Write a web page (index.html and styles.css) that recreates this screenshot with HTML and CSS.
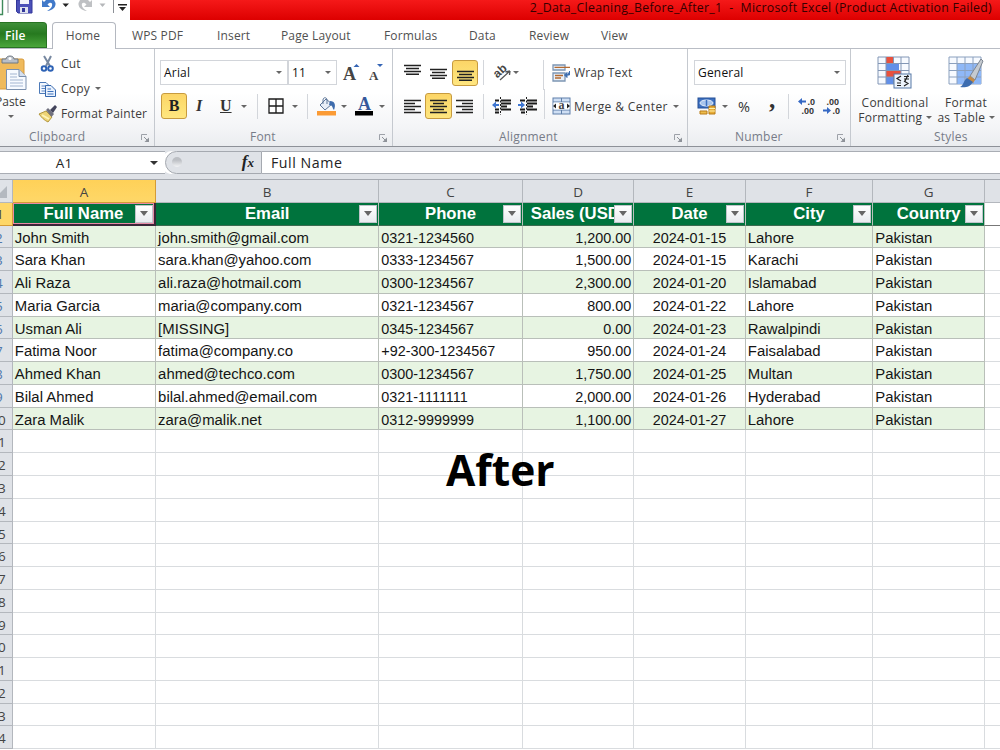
FILE: index.html
```html
<!DOCTYPE html>
<html lang="en">
<head>
    <meta charset="UTF-8" />
    <meta name="viewport" content="width=device-width, initial-scale=1.0" />
    <title>2_Data_Cleaning_Before_After_1 - Microsoft Excel</title>
    <link rel="stylesheet" href="styles.css">
</head>
<body>
    <!-- TITLE BAR -->
    <header class="titlebar">
        <svg class="quick" width="130" height="20" viewBox="0 0 130 20">
            <path d="M0 14.5H2.5V0" fill="none" stroke="#3f8a5b" stroke-width="1.4"/>
            <path d="M8 0V13M113.5 0V13" stroke="#8b8f96"/>
            <path d="M16.5 0H32V13H18L16.500 11.500Z" fill="#4b50b8" stroke="#32369a"/>
            <path d="M20 0H29V4H20Z" fill="#f2f4fb"/>
            <path d="M20 7H28V13H20Z" fill="#dfe3ee"/>
            <path d="M22 8H25V12H22Z" fill="#32369a"/>
            <path d="M42 0V7H50L47.500 4.500C50 1.500 53 3 52 6C51.500 8 50 9 47 11C53 10.500 56 7 55.500 3L54 0H46L44 2Z" fill="#4179c9"/>
            <path d="M92 0V7H84L86.500 4.500C84 1.500 81 3 82 6C82.500 8 84 9 87 11C81 10.500 78 7 78.500 3L80 0H88L90 2Z" fill="#bfc1c4"/>
            <path d="M62.500 3.500H69L65.700 7Z" fill="#222"/>
            <path d="M99.500 3.500H105.500L102.500 7Z" fill="#b5b7ba"/>
            <path d="M118 4H127V5.500H118ZM119 7H126L122.500 11Z" fill="#222"/>
        </svg>
        <div class="title">2_Data_Cleaning_Before_After_1 &nbsp;-&nbsp; Microsoft Excel (Product Activation Failed)</div>
    </header>

    <!-- TABS -->
    <nav class="tabs">
        <span class="file">File</span>
        <span class="home">Home</span>
        <span>WPS PDF</span>
        <span>Insert</span>
        <span>Page Layout</span>
        <span>Formulas</span>
        <span>Data</span>
        <span>Review</span>
        <span>View</span>
    </nav>

    <!-- RIBBON -->
    <section class="ribbon">
        <div class="group clipboard">
            <div class="clip-body">
                <div class="paste">
                    <svg width="28" height="38" viewBox="0 0 28 38">
                        <rect x="-8" y="4" width="32" height="30" rx="2" fill="#efba5c" stroke="#d79b3c"/>
                        <path d="M2 4H6C6 0 14 0 14 4H18V8H2Z" fill="#b9bfc8" stroke="#6f7883"/>
                        <circle cx="10" cy="3.500" r="1.500" fill="#fff"/>
                        <path d="M6.500 14.500H19L26 21.500V34.500H6.500Z" fill="#f7faff" stroke="#7b90ae"/>
                        <path d="M19 14.500V21.500H26" fill="#d5e0f0" stroke="#7b90ae"/>
                        <path d="M10 19H17M10 22H17M10 25H23M10 28H23M10 31H23" stroke="#a3b5d0"/>
                    </svg>
                    <span>Paste</span>
                    <i class="arrow"></i>
                </div>
                <div class="clip-list">
                    <div>
                        <svg width="20" height="18" viewBox="0 0 20 18">
                            <path d="M6 1L12 11M13 1L8 11" stroke="#7788a0" stroke-width="2"/>
                            <circle cx="6" cy="13.500" r="2.300" fill="none" stroke="#2d62b5" stroke-width="2"/>
                            <circle cx="12.500" cy="13.500" r="2.300" fill="none" stroke="#2d62b5" stroke-width="2"/>
                        </svg>
                        <span>Cut</span>
                    </div>
                    <div>
                        <svg width="20" height="18" viewBox="0 0 20 18">
                            <path d="M1.500 2.500H8L11.500 6V13.500H1.500Z" fill="#f2f7fe" stroke="#4d7ab8"/>
                            <path d="M3.500 6H8M3.500 8.500H8M3.500 11H8" stroke="#5c86c4"/>
                            <path d="M7.500 5.500H13L17.500 10V16.500H7.500Z" fill="#eaf2fd" stroke="#3567ad"/>
                            <path d="M9.500 9H13M9.500 11.500H15.500M9.500 14H15.500" stroke="#3f73bd"/>
                        </svg>
                        <span class="copy">Copy</span><i class="arrow"></i>
                    </div>
                    <div>
                        <svg width="20" height="18" viewBox="0 0 20 18">
                            <path d="M1 9L8 6L14 12L10 17C6 15 4 13 1 9Z" fill="#eed476" stroke="#b3973f"/>
                            <path d="M4 10L11 14" stroke="#fff4b7" stroke-width="2"/>
                            <path d="M8 5L10 3L16 9L13.500 12Z" fill="#70717f"/>
                            <path d="M12 5L17 0L19 2L15 8Z" fill="#43445c"/>
                        </svg>
                        <span>Format Painter</span>
                    </div>
                </div>
            </div>
            <div class="label"><span>Clipboard</span><svg class="launch" width="8" height="8" viewBox="0 0 8 8"><path d="M.500 6V.500H6" fill="none" stroke="#9da1a8"/><path d="M3 3L6 6" stroke="#8e9299"/><path d="M8 3.500V8H3.500Z" fill="#8e9299"/></svg></div>
        </div>

        <div class="group font">
            <div class="row font-top">
                <div class="select">Arial<i class="arrow"></i></div>
                <div class="select">11<i class="arrow"></i></div>
                <svg class="grow" width="20" height="22" viewBox="0 0 20 22">
                    <text x="0" y="18" class="serif" font-size="18">A</text>
                    <path d="M10.500 5H16.500L13.500 2Z" fill="#3565b5"/>
                </svg>
                <svg class="shrink" width="20" height="22" viewBox="0 0 20 22">
                    <text x="0" y="18" class="serif" font-size="13">A</text>
                    <path d="M8 2H14L11 5Z" fill="#3565b5"/>
                </svg>
            </div>
            <div class="row font-bottom">
                <b class="on letter">B</b>
                <em class="letter">I</em>
                <u class="letter">U</u>
                <i class="arrow"></i>
                <i class="sep"></i>
                <svg width="16" height="16" viewBox="0 0 16 16"><path d="M1 1H15V15H1ZM8 1V15M1 8H15" fill="#fff" stroke="#1b1b1b" stroke-width="1.300"/></svg>
                <i class="arrow"></i>
                <i class="sep"></i>
                <svg width="19" height="19" viewBox="0 0 19 19">
                    <path d="M3 8L9 2L15 7L8 13Z" fill="#e8eef7" stroke="#5d7699"/>
                    <path d="M6 7V3C6 0 10 0 10 3V7" fill="none" stroke="#5d7699"/>
                    <path d="M13 4C18 4 19 8 17 13C15 11 16 8 12 8Z" fill="#3e6cad"/>
                    <rect x="0" y="14" width="19" height="4.500" fill="#fb9b35"/>
                </svg>
                <i class="arrow"></i>
                <svg width="19" height="19" viewBox="0 0 19 19">
                    <text x="3" y="13" class="serif blue" font-size="18">A</text>
                    <rect x="0" y="14" width="18" height="4.500" fill="#000"/>
                </svg>
                <i class="arrow"></i>
            </div>
            <div class="label"><span>Font</span><svg class="launch" width="8" height="8" viewBox="0 0 8 8"><path d="M.500 6V.500H6" fill="none" stroke="#9da1a8"/><path d="M3 3L6 6" stroke="#8e9299"/><path d="M8 3.500V8H3.500Z" fill="#8e9299"/></svg></div>
        </div>

        <div class="group alignment">
            <div class="row align-top">
                <svg width="17" height="17" viewBox="0 0 17 17"><path d="M0 1.500H17M2 4.500H15M0 7.500H17M2 10.200H15" stroke="#222" stroke-width="1.400"/></svg>
                <svg width="17" height="17" viewBox="0 0 17 17"><path d="M0 5.500H17M2 8.500H15M0 11.500H17M2 14.200H15" stroke="#222" stroke-width="1.400"/></svg>
                <div class="on"><svg width="17" height="17" viewBox="0 0 17 17"><path d="M0 7.500H17M2 10.500H15M0 13.500H17M2 16.200H15" stroke="#222" stroke-width="1.400"/></svg></div>
                <i class="sep"></i>
                <svg width="19" height="18" viewBox="0 0 19 18">
                    <text x="1" y="12" class="ab" transform="rotate(-42 6 9)">ab</text>
                    <path d="M7 16L17 7M17 7L12.500 8M17 7L16.500 11" fill="none" stroke="#555" stroke-width="1.300"/>
                </svg>
                <i class="arrow"></i>
                <i class="sep tall"></i>
                <svg width="20" height="18" viewBox="0 0 20 18">
                    <path d="M1 1H13V6H1ZM1 9H13V17H1Z" fill="#e9f0f8" stroke="#7c95b3" stroke-width="1.300"/>
                    <path d="M2.500 3.300H18M3 11.500H11M3 14H9" stroke="#b36a31" stroke-width="1.300"/>
                    <path d="M17.500 7V11H15M15 8.500V13.500L12.500 11Z" fill="#3f6faf" stroke="#3f6faf"/>
                </svg>
                <span class="wrap">Wrap Text</span>
            </div>
            <div class="row align-bottom">
                <svg width="17" height="17" viewBox="0 0 17 17"><path d="M0 2.500H17M0 5.500H11M0 8.500H17M0 11.500H11M0 14.500H17" stroke="#222" stroke-width="1.400"/></svg>
                <div class="on wide"><svg width="17" height="17" viewBox="0 0 17 17"><path d="M0 2.500H17M3 5.500H14M0 8.500H17M3 11.500H14M0 14.500H17" stroke="#222" stroke-width="1.400"/></svg></div>
                <svg width="17" height="17" viewBox="0 0 17 17"><path d="M0 2.500H17M6 5.500H17M0 8.500H17M6 11.500H17M0 14.500H17" stroke="#222" stroke-width="1.400"/></svg>
                <i class="sep"></i>
                <svg width="20" height="18" viewBox="0 0 20 18">
                    <path d="M3 3.500H7M9 3.500H19M9 6.500H19M9 9.500H15M3 12.500H7M9 12.500H19M3 15.500H7" stroke="#1b1b1b" stroke-width="1.800"/>
                    <path d="M8.500 0V18" stroke="#1b1b1b" stroke-dasharray="2 1.500"/>
                    <path d="M0 8L4 4.500V7H7V9H4V11.500Z" fill="#3d75d1"/>
                </svg>
                <svg width="20" height="18" viewBox="0 0 20 18">
                    <path d="M2 3.500H7M9 3.500H19M9 6.500H19M9 9.500H15M2 12.500H7M9 12.500H19M3 15.500H7" stroke="#1b1b1b" stroke-width="1.800"/>
                    <path d="M8.500 0V18" stroke="#1b1b1b" stroke-dasharray="2 1.500"/>
                    <path d="M7 8L3 4.500V7H0V9H3V11.500Z" fill="#3d75d1"/>
                </svg>
                <i class="sep tall"></i>
                <svg width="20" height="18" viewBox="0 0 20 18">
                    <rect x="1" y="1" width="17" height="16" fill="#cfdff4" stroke="#5f7fa9"/>
                    <path d="M1 5H18M1 13H18M9.500 1V5M9.500 13V17" stroke="#5f7fa9"/>
                    <rect x="1.500" y="5.500" width="16" height="7" fill="#fff"/>
                    <path d="M1 9L4 6.500V11.500ZM18 9L15 6.500V11.500Z" fill="#222"/>
                    <text x="6.500" y="12" class="serif" font-size="12">a</text>
                </svg>
                <span class="merge">Merge &amp; Center</span>
                <i class="arrow"></i>
            </div>
            <div class="label"><span>Alignment</span><svg class="launch" width="8" height="8" viewBox="0 0 8 8"><path d="M.500 6V.500H6" fill="none" stroke="#9da1a8"/><path d="M3 3L6 6" stroke="#8e9299"/><path d="M8 3.500V8H3.500Z" fill="#8e9299"/></svg></div>
        </div>

        <div class="group number">
            <div class="row"><div class="select general">General<i class="arrow"></i></div></div>
            <div class="row number-bottom">
                <svg width="20" height="19" viewBox="0 0 20 19">
                    <rect x="1" y="1" width="17" height="10" fill="#3d70c0" stroke="#254f96"/>
                    <ellipse cx="9.500" cy="6" rx="6.500" ry="3" fill="#a9c5ec" stroke="#e2ecfa"/>
                    <path d="M9.500 3V9" stroke="#3d70c0" stroke-width="1.500"/>
                    <path d="M12 9H18V17H12Z" fill="#e8ad37" stroke="#b97d18"/>
                    <path d="M3 14H10V17H3Z" fill="#edbc4c" stroke="#b97d18"/>
                    <path d="M12 11.500H18M12 14H18" stroke="#fff0a8"/>
                </svg>
                <i class="arrow"></i>
                <span class="percent">%</span>
                <span class="comma">,</span>
                <i class="sep"></i>
                <svg width="20" height="18" viewBox="0 0 20 18">
                    <text x="9.500" y="8" class="dec">.0</text><text x="3.500" y="17" class="dec">.00</text>
                    <path d="M0 4.500L4 1V3.500H8V5.500H4V8Z" fill="#3568c4"/>
                </svg>
                <svg width="20" height="18" viewBox="0 0 20 18">
                    <text x="3.500" y="8" class="dec">.00</text><text x="9.500" y="17" class="dec">.0</text>
                    <path d="M8 13.500L4 10V12.500H0V14.500H4V17Z" fill="#3568c4"/>
                </svg>
            </div>
            <div class="label"><span>Number</span><svg class="launch" width="8" height="8" viewBox="0 0 8 8"><path d="M.500 6V.500H6" fill="none" stroke="#9da1a8"/><path d="M3 3L6 6" stroke="#8e9299"/><path d="M8 3.500V8H3.500Z" fill="#8e9299"/></svg></div>
        </div>

        <div class="group styles">
            <div class="styles-body">
                <div class="big">
                    <svg width="36" height="35" viewBox="0 0 36 35">
                        <path d="M1 1H32V28H1Z" fill="#f7faff" stroke="#8296b5"/>
                        <path d="M9 1H16V7.500H9ZM9 14.500H24V21H9Z" fill="#e8513d"/>
                        <path d="M9 7.500H22V14.500H9ZM9 21H16V28H9Z" fill="#618fe8"/>
                        <path d="M1 7.500H32M1 14.500H32M1 21H32M9 1V28M24 1V28M16.500 1V7.500M16.500 21V28" stroke="#8296b5"/>
                        <rect x="17" y="18" width="17" height="14" fill="#edf4fc" stroke="#5679a6"/>
                        <path d="M24 20L20 22.500L24 25M27 20.500H32M27 23H32M31 19L28 25M20 27H24M20 29.500H24M27 25L31 27.500L27 30" fill="none" stroke="#222" stroke-width="1.200"/>
                    </svg>
                    <span>Conditional</span>
                    <span>Formatting <i class="arrow"></i></span>
                </div>
                <div class="big narrow">
                    <svg width="36" height="35" viewBox="0 0 36 35">
                        <path d="M1 1H33V28H1Z" fill="#f7faff" stroke="#8ba0be"/>
                        <path d="M9 7.500H33V28H9Z" fill="#8fb8f7"/>
                        <path d="M1 7.500H33M1 14.500H33M1 21H33M9 1V28M17 1V28M25 1V28" stroke="#8ba0be"/>
                        <path d="M33 3L35 5L27 24L22 20Z" fill="#c5cad0" stroke="#7c8591"/>
                        <path d="M22 20L27 24L25 27L19 23Z" fill="#c58a44"/>
                        <path d="M19 22L25 26C22 31 17 32 12 31C16 29 15 25 19 22Z" fill="#3c6caf"/>
                    </svg>
                    <span>Format</span>
                    <span>as Table <i class="arrow"></i></span>
                </div>
            </div>
            <div class="label"><span>Styles</span></div>
        </div>
    </section>

    <!-- FORMULA BAR -->
    <section class="formula">
        <div class="namebox"><span>A1</span><i class="arrow"></i></div>
        <div class="fx"><i class="knob"></i><span>f<small>x</small></span></div>
        <div class="value">Full Name</div>
    </section>

    <!-- SHEET -->
    <main class="sheet" id="sheet">
        <div class="line head">
            <div class="corner"><svg width="8" height="12" viewBox="0 0 8 12"><path d="M7 0V12H-5Z" fill="#b4b9c0"/></svg></div>
            <div class="active">A</div><div>B</div><div>C</div><div>D</div><div>E</div><div>F</div><div>G</div><div></div>
        </div>
    </main>
    <div class="caption">After</div>

    <script>
        const titles = ["Full Name", "Email", "Phone", "Sales (USD)", "Date", "City", "Country"];
        const rows = [
            ["John Smith", "john.smith@gmail.com", "0321-1234560", "1,200.00", "2024-01-15", "Lahore", "Pakistan"],
            ["Sara Khan", "sara.khan@yahoo.com", "0333-1234567", "1,500.00", "2024-01-15", "Karachi", "Pakistan"],
            ["Ali Raza", "ali.raza@hotmail.com", "0300-1234567", "2,300.00", "2024-01-20", "Islamabad", "Pakistan"],
            ["Maria Garcia", "maria@company.com", "0321-1234567", "800.00", "2024-01-22", "Lahore", "Pakistan"],
            ["Usman Ali", "[MISSING]", "0345-1234567", "0.00", "2024-01-23", "Rawalpindi", "Pakistan"],
            ["Fatima Noor", "fatima@company.co", "+92-300-1234567", "950.00", "2024-01-24", "Faisalabad", "Pakistan"],
            ["Ahmed Khan", "ahmed@techco.com", "0300-1234567", "1,750.00", "2024-01-25", "Multan", "Pakistan"],
            ["Bilal Ahmed", "bilal.ahmed@email.com", "0321-1111111", "2,000.00", "2024-01-26", "Hyderabad", "Pakistan"],
            ["Zara Malik", "zara@malik.net", "0312-9999999", "1,100.00", "2024-01-27", "Lahore", "Pakistan"]
        ];

        // Row 1 with the filter buttons
        let html = "<div class='line titles'><div class='num'><span>1</span></div>" +
            titles.map(t => `<div><span>${t}</span><b class="filter"><i class="arrow"></i></b></div>`).join('') +
            "<div></div></div>";

        // Rows 2 to 24, empty after the data
        for (let n = 2; n <= 24; n++) {
            const row = rows[n - 2];
            html += `<div class="line ${row ? 'data' : 'blank'}"><div class="num"><span>${n}</span></div>` +
                (row || Array(7).fill('')).map(c => `<div>${c}</div>`).join('') + "<div></div></div>";
        }
        document.getElementById('sheet').insertAdjacentHTML('beforeend', html);
    </script>
</body>
</html>
```

FILE: styles.css
```css
* {
    box-sizing: border-box;
}
body {
    margin: 0;
    height: 750px;
    overflow: hidden;
    position: relative;
    background-color: #fff;
    font-family: 'Open Sans', 'Noto Sans', sans-serif;
    font-size: 12px;
    color: #3c3c3c;
    white-space: nowrap;
}
svg {
    display: block;
    overflow: visible;
    flex: none;
}

/* Title bar */
.titlebar {
    display: flex;
    height: 20px;
    overflow: hidden;
}
.title {
    flex: 1;
    background: linear-gradient(#f51919, #dd0000);
    color: #350000;
    text-align: right;
    line-height: 16px;
    padding-right: 8px;
    font-size: 12.300px;
    letter-spacing: 0.290px;
}

/* Tabs */
.tabs {
    display: grid;
    grid-template-columns: 47px 5px 64px 16px 85px 64px 103px 85px 60px 72px 60px;
    height: 29px;
    border-bottom: 1px solid #b9bdc5;
    line-height: 27px;
    padding-top: 2px;
    color: #505050;
    letter-spacing: 0.150px;
}
.tabs span:nth-child(3) {
    grid-column: 5;
}
.file {
    height: 26px;
    line-height: 25px;
    padding-left: 5px;
    background: linear-gradient(#3f8f39, #26791f 45%, #4aa63b);
    border: 1px solid #287323;
    border-left: 0;
    border-radius: 0 4px 0 0;
    color: #fff;
    font-weight: 600;
}
.home {
    grid-column: 3;
    height: 27px;
    line-height: 26px;
    text-align: center;
    padding-right: 2px;
    background-color: #fff;
    border: 1px solid #b4b8c0;
    border-bottom: 0;
    border-radius: 4px 4px 0 0;
}

/* Ribbon */
.ribbon {
    display: flex;
    height: 98px;
    background: linear-gradient(#fff 45%, #f4f5f7 80%, #ebedf0);
    border-bottom: 1px solid #8d9198;
}
.group {
    flex: none;
    display: flex;
    flex-direction: column;
    border-right: 1px solid #c5c9cf;
    padding-top: 11px;
}
.clipboard { width: 155px; padding-top: 2px; }
.font { width: 238px; }
.alignment { width: 295px; }
.number { width: 163px; }
.styles { width: 198px; padding-top: 7px; }
.row {
    display: grid;
    grid-template-rows: 100%;
    align-items: center;
    justify-items: start;
    height: 25px;
    margin-bottom: 8px;
}
.row:nth-child(2) {
    height: 26px;
    margin-bottom: 0;
}
.label {
    display: flex;
    margin-top: auto;
    height: 17px;
    line-height: 16px;
    color: #777c88;
    letter-spacing: 0.200px;
}
.launch {
    margin: 5px 5px 0 auto;
}
.clipboard .label { padding-left: 29px; }
.font .label { padding-left: 95px; }
.alignment .label { padding-left: 106px; }
.number .label { padding-left: 47px; }
.styles .label { padding-left: 83px; }

.arrow {
    display: inline-block;
    width: 0;
    height: 0;
    border: 3px solid transparent;
    border-top: 3.500px solid #666;
    border-bottom: 0;
}
.sep {
    width: 1px;
    height: 25px;
    background-color: #d3d6db;
}
.sep.tall {
    height: 30px;
}
.on {
    display: flex;
    align-items: center;
    justify-content: center;
    width: 26px;
    height: 26px;
    background: linear-gradient(#fcd567, #fddf73 50%, #ffe680);
    border: 1px solid #c79b3f;
    border-radius: 3px;
}
.on.wide {
    width: 27px;
}

.clip-body {
    display: flex;
}
.paste {
    width: 38px;
    display: flex;
    flex-direction: column;
    align-items: flex-start;
    padding-top: 4px;
}
.paste span {
    margin-left: -5px;
    line-height: 18px;
    margin-top: 0;
}
.paste .arrow {
    margin: 4px 0 0 8px;
}
.clip-list {
    letter-spacing: 0.180px;
}
.clip-list div {
    display: flex;
    align-items: center;
    height: 25px;
}
.clip-list svg {
    margin-right: 3px;
}
.clip-list .arrow {
    margin-left: 5px;
}

.select {
    display: flex;
    align-items: center;
    justify-content: space-between;
    width: 100%;
    height: 25px;
    padding: 0 5px 0 3px;
    background-color: #fff;
    border: 1px solid #d2d5da;
    color: #111;
    letter-spacing: 0.200px;
}
.general {
    width: 152px;
    margin-left: 6px;
}
.font-top { grid-template-columns: 5px 128px 49px 6px 26px 20px; }
.font-top > :first-child { grid-column: 2; }
.font-top .grow { grid-column: 5; }
.serif {
    font-family: 'Liberation Serif', serif;
    font-weight: bold;
    fill: #444;
}
.serif.blue {
    fill: #35589a;
}
.font-bottom {
    grid-template-columns: 33px 26px 21px 16px 11px 24px 15px 10px 24px 14px 24px 10px;
    padding-left: 6px;
}
.letter {
    font-family: 'Liberation Serif', serif;
    font-size: 16px;
    font-weight: bold;
    color: #333;
}
b.letter { color: #222; }
em.letter { margin-left: 2px; }

.align-top { grid-template-columns: 26px 22px 31px 10px 20px 30px 9px 22px 80px; padding-left: 11px; }
.align-bottom { grid-template-columns: 21px 31px 27px 9px 26px 26px 8px 22px 99px 10px; padding-left: 11px; }
.align-bottom .sep.tall { align-self: end; }
.align-top .sep.tall { align-self: start; }
.wrap { letter-spacing: 0.150px; }
.merge { letter-spacing: 0.400px; }
.ab {
    font-family: 'Liberation Sans', sans-serif;
    font-size: 12px;
    font-weight: bold;
    fill: #444;
}
.number-bottom { grid-template-columns: 25px 16px 31px 19px 10px 25px 20px; padding-left: 9px; }
.percent {
    font-size: 14.500px;
    color: #333;
}
.comma {
    font-family: 'Liberation Serif', serif;
    font-size: 25px;
    font-weight: bold;
    line-height: 20px;
    margin-top: -12px;
    color: #333;
}
.dec {
    font-family: 'Liberation Sans', sans-serif;
    font-size: 9px;
    font-weight: bold;
    fill: #333;
}
.styles-body {
    display: flex;
}
.big {
    width: 88px;
    display: flex;
    flex-direction: column;
    align-items: center;
    line-height: 15px;
    letter-spacing: 0.250px;
}
.big svg {
    margin-bottom: 4px;
}
.big .arrow {
    vertical-align: 3px;
}
.big.narrow {
    width: 54px;
}

/* Formula bar */
.formula {
    display: flex;
    height: 33px;
    padding: 4px 0 5px;
    background-color: #dfe2e7;
    border-bottom: 1px solid #a5a9b0;
    font-size: 14px;
    line-height: 22px;
    color: #222;
}
.namebox {
    width: 165px;
    display: flex;
    align-items: center;
    background-color: #fff;
    border-top: 1px solid #a9adb4;
    border-bottom: 1px solid #a9adb4;
}
.namebox span {
    width: 128px;
    text-align: center;
    font-size: 13.500px;
}
.namebox .arrow {
    margin-left: 22px;
    border-width: 4px 4px 0;
    border-top-color: #333;
}
.fx {
    display: flex;
    justify-content: space-between;
    width: 97px;
    padding: 0 7px 0 6px;
    border: 1px solid #a5a9b0;
    border-radius: 12px 0 0 12px;
    background-color: #dfe2e7;
    box-shadow: -4px 0 0 #fff;
    font: italic bold 17px/20px 'Liberation Serif', serif;
}
.fx small {
    font-size: 13px;
}
.knob {
    width: 10px;
    height: 10px;
    margin-top: 5px;
    border-radius: 50%;
    background: linear-gradient(#bcbfc4 30%, #f3f4f6);
}
.value {
    flex: 1;
    padding-left: 9px;
    background-color: #fff;
    border-top: 1px solid #a9adb4;
    border-bottom: 1px solid #a9adb4;
    font-size: 14.200px;
    letter-spacing: 0.550px;
}

/* Sheet */
.line {
    display: grid;
    grid-template-columns: 12.800px 143.300px 223.200px 143.500px 111.500px 111.500px 127.500px 111.800px 1fr;
    height: 22.770px;
    font-family: 'Liberation Sans', sans-serif;
    font-size: 14.900px;
    line-height: 24px;
    color: #151515;
}
.line > div {
    min-width: 0;
    padding: 0 2px 0 2px;
    border-right: 1px solid #d9dcdf;
    border-bottom: 1px solid #d9dcdf;
    overflow: hidden;
}
.line > div:last-child {
    border-right: 0;
}
.head {
    height: 22.800px;
    font-family: 'Open Sans', sans-serif;
    font-size: 13.500px;
    text-align: center;
}
.head > div {
    background-color: #dfe2e7;
    border-color: #b3b7bd;
    color: #444;
}
.head > .active {
    background: linear-gradient(#ffd158, #fed768);
    border-color: #d49b36;
}
.head > .corner {
    padding: 6px 0 0;
}
.line > .num {
    display: flex;
    justify-content: flex-end;
    padding: 0 6px 0 0;
    background-color: #dfe2e7;
    border-color: #b3b7bd;
    font-family: 'Open Sans', sans-serif;
    font-size: 13.500px;
    color: #444;
}
.data > .num {
    padding-right: 9px;
    color: #4f78ac;
}
.line:nth-child(11) > .num {
    padding-right: 6px;
    color: #444;
}
.titles > .num {
    padding-right: 8px;
    background-color: #fed768;
    border-color: #d49b36;
}
.titles {
    line-height: 22px;
}
.titles > div:not(.num):not(:last-child) {
    position: relative;
    background-color: #00733d;
    border-right-color: #b9c2bc;
    border-bottom-color: #3b6b50;
    color: #fff;
    font-size: 16.700px;
    font-weight: bold;
    text-align: center;
}
.titles > div:last-child {
    border-bottom-color: #777;
}
.titles > div.num + div:not(.num):not(:last-child) {
    border-bottom: 2px solid #3a2638;
    border-right: 2px solid #3a2638;
    box-shadow: inset 0 0 0 1px #e88aa6;
}
.titles > div:nth-child(5):not(.num):not(:last-child) {
    padding-left: 8px;
    text-align: left;
}
.filter {
    position: absolute;
    right: 1px;
    top: 2px;
    display: flex;
    align-items: center;
    justify-content: center;
    width: 18px;
    height: 18px;
    background: linear-gradient(#fff, #e8ebef);
    border: 1px solid #bfc4ca;
}
.filter .arrow {
    border-width: 5px 4px 0;
}
.data > div {
    border-color: #b9bfb9;
}
.data:nth-child(odd) > div:not(.num):not(:last-child) {
    background-color: #e7f4e2;
}
.data > div:last-child {
    border-bottom-color: #d9dcdf;
}
.data > div:nth-child(4),
.data > div:nth-child(5),
.data > div:nth-child(6) {
    font-size: 14.400px;
}
.data > div:nth-child(5) {
    text-align: right;
}
.data > div:nth-child(6) {
    text-align: center;
}

/* Caption laid over the empty cells */
.caption {
    position: absolute;
    left: 446px;
    top: 441px;
    font-size: 42.500px;
    font-weight: bold;
    line-height: 58px;
    color: #000;
}
```
